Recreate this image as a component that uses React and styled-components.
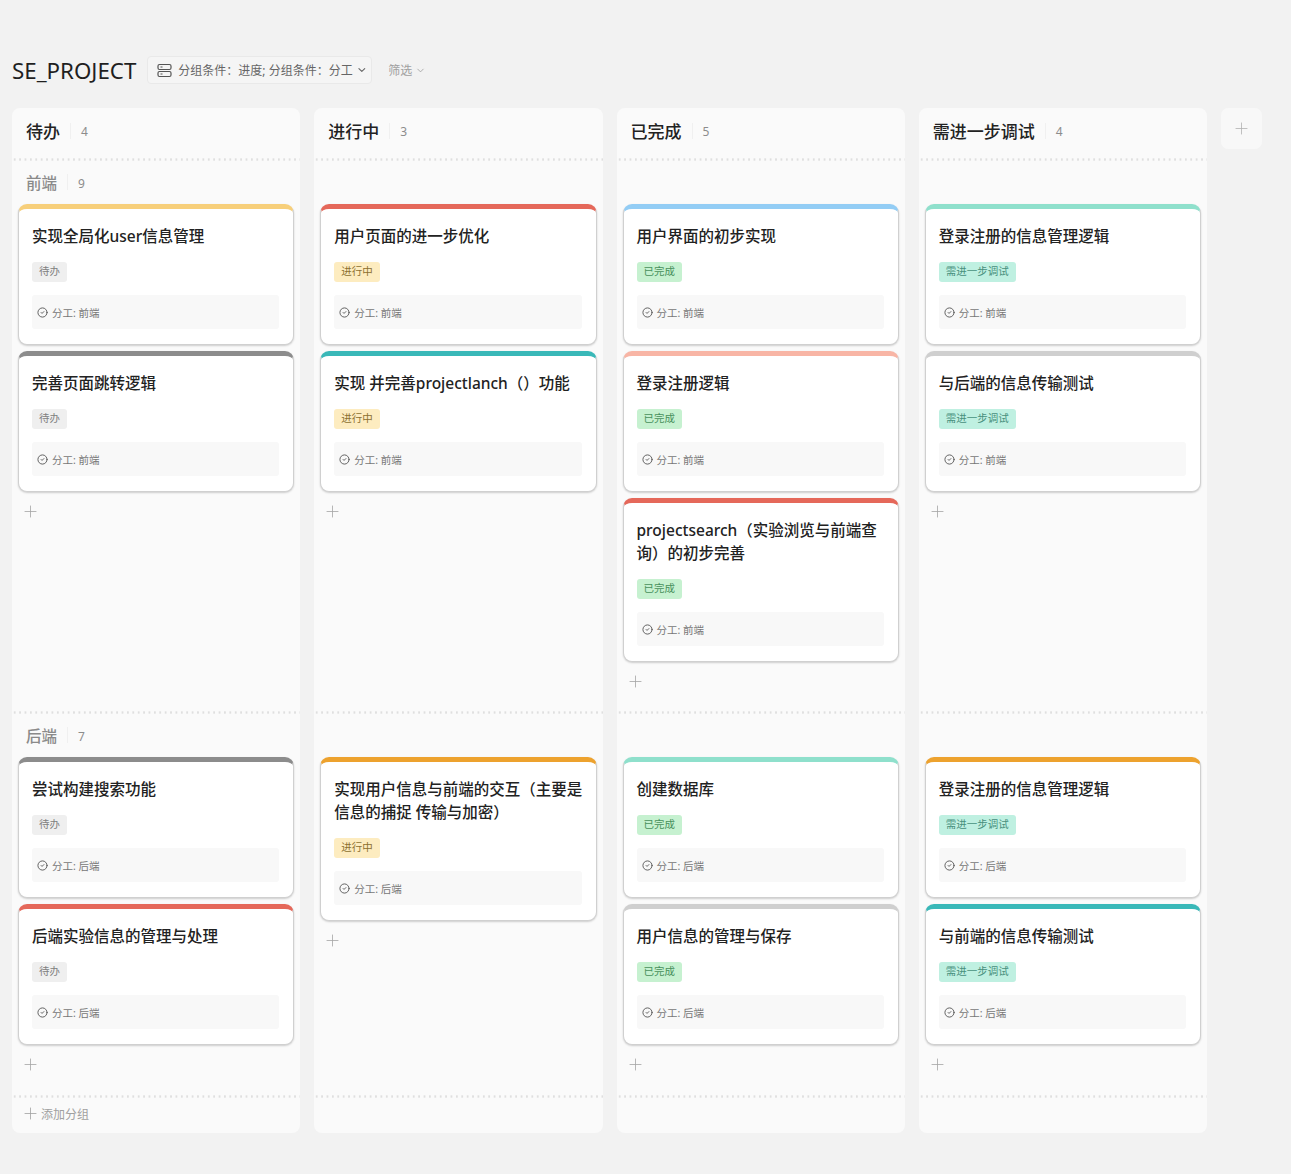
import styled, { createGlobalStyle } from 'styled-components'
import { CircleCheck, ChevronDown, Plus } from 'lucide-react'

const GlobalStyle = createGlobalStyle`
  html, body {
    margin: 0;
    padding: 0;
    background: #f2f2f2;
  }
  body {
    font-family: "Noto Sans", "Noto Sans CJK SC", sans-serif;
    -webkit-font-smoothing: antialiased;
  }
`

const dottedLine = `
  background-image: radial-gradient(circle, #dfdfdf 1px, transparent 1.3px);
  background-size: 5.4px 3px;
  background-repeat: repeat-x;
  background-position: 0 0;
  padding-top: 2px;
`

const Page = styled.div`
  width: 1291px;
  height: 1174px;
  overflow: hidden;
  padding: 56px 0 0 12px;
  box-sizing: border-box;
`

const Toolbar = styled.div`
  display: flex;
  align-items: center;
  height: 28px;
  margin-bottom: 24px;
`

const ProjectName = styled.h1`
  margin: 0 11px 0 0;
  font-size: 22.3px;
  font-weight: 400;
  line-height: 28px;
  padding-top: 2px;
  color: #1f1f1f;
`

const GroupPill = styled.div`
  display: flex;
  align-items: center;
  gap: 3px;
  height: 28px;
  box-sizing: border-box;
  width: 225px;
  padding: 0 4px 0 9px;
  border: 1px solid #e9e9e9;
  border-radius: 4px;
  background: #f5f5f5;
  font-size: 12px;
  color: #666;
  white-space: nowrap;
`

const GroupIconSvg = styled.svg`
  flex: none;
  margin-right: 3px;
`

const FilterButton = styled.div`
  display: flex;
  align-items: center;
  gap: 3px;
  margin-left: 16px;
  font-size: 12px;
  color: #a0a0a0;
`

const Board = styled.div`
  display: flex;
  align-items: flex-start;
  gap: 14px;
`

const Column = styled.section`
  flex: none;
  width: 288.25px;
  height: 1025px;
  display: flex;
  flex-direction: column;
  border-radius: 8px;
  background: #fafafa;
`

const ColumnHeader = styled.header`
  display: flex;
  align-items: center;
  height: 50px;
  padding: 0 14px 5px;
  box-sizing: border-box;
  flex: none;
`

const ColumnTitle = styled.span`
  font-size: 17px;
  font-weight: 500;
  color: #222;
`

const Divider = styled.i`
  width: 1px;
  height: 16px;
  background: #f0f0f0;
  margin: 0 10px;
`

const Count = styled.span`
  font-size: 12px;
  color: #8c8c8c;
  padding-top: 2px;
`

const Group = styled.div`
  ${dottedLine}
  flex: none;
  height: ${(p) => p.$height}px;
  box-sizing: border-box;
  padding-left: 6px;
  padding-right: 6px;
`

const GroupHeading = styled.div`
  display: flex;
  align-items: center;
  height: ${(p) => p.$height}px;
  padding: 0 8px;
  box-sizing: border-box;
`

const GroupTitle = styled.span`
  font-size: 15.5px;
  font-weight: 500;
  color: #8a8a8a;
`

const CardList = styled.div`
  display: flex;
  flex-direction: column;
  gap: 6px;
`

const Card = styled.article`
  box-sizing: border-box;
  padding: 16px 14px 15px 13px;
  border: 1px solid #d0d0d0;
  border-top: 5px solid ${(p) => p.$accent};
  border-radius: 9px;
  background: #fff;
  box-shadow: 0 1px 2px rgba(0, 0, 0, 0.18);
`

const CardTitle = styled.div`
  margin-right: -2px;
  font-size: 15.5px;
  line-height: 23px;
  font-weight: 500;
  color: #222;
`

const TagRow = styled.div`
  height: 33px;
`

const Tag = styled.span`
  display: inline-block;
  height: 20px;
  margin-top: 14px;
  padding: 0 7px;
  border-radius: 3px;
  font-size: 10.5px;
  line-height: 19px;
  vertical-align: top;
  background: ${(p) => p.$bg};
  color: ${(p) => p.$fg};
`

const MetaRow = styled.div`
  display: flex;
  align-items: center;
  gap: 4px;
  height: 34px;
  margin-top: 14px;
  padding-left: 5px;
  border-radius: 3px;
  background: #f8f8f8;
  font-size: 10.5px;
  color: #777;

  svg {
    color: #555;
  }
`

const AddRow = styled.div`
  display: flex;
  align-items: center;
  height: 38px;
  padding-left: 3px;
  color: #a4a4a4;
`

const Footer = styled.div`
  ${dottedLine}
  flex: 1;
  display: flex;
  align-items: center;
  gap: 1px;
  padding-left: 9px;
  padding-bottom: 3px;
  font-size: 12px;
  color: #a0a0a0;
`

const AddColumn = styled.div`
  flex: none;
  width: 41px;
  height: 41px;
  display: flex;
  align-items: center;
  justify-content: center;
  border-radius: 7px;
  background: #f8f8f8;
  color: #b0b0b0;
`

const TAGS = {
  todo: { label: '待办', bg: '#efefef', fg: '#808080' },
  doing: { label: '进行中', bg: '#fdecc0', fg: '#8c7030' },
  done: { label: '已完成', bg: '#c6f1d0', fg: '#48905c' },
  debug: { label: '需进一步调试', bg: '#bff0e1', fg: '#488f7d' },
}

const COLUMNS = [
  {
    title: '待办',
    count: 4,
    tag: 'todo',
    front: [
      ['实现全局化user信息管理', '#f7cf7a'],
      ['完善页面跳转逻辑', '#8c8c8c'],
    ],
    back: [
      ['尝试构建搜索功能', '#8c8c8c'],
      ['后端实验信息的管理与处理', '#e5685a'],
    ],
  },
  {
    title: '进行中',
    count: 3,
    tag: 'doing',
    front: [
      ['用户页面的进一步优化', '#e5685a'],
      ['实现 并完善projectlanch（）功能', '#39b8b8'],
    ],
    back: [['实现用户信息与前端的交互（主要是信息的捕捉 传输与加密）', '#eda22e']],
  },
  {
    title: '已完成',
    count: 5,
    tag: 'done',
    front: [
      ['用户界面的初步实现', '#93cdf5'],
      ['登录注册逻辑', '#f8b5a5'],
      ['projectsearch（实验浏览与前端查询）的初步完善', '#e5685a'],
    ],
    back: [
      ['创建数据库', '#8fe0cc'],
      ['用户信息的管理与保存', '#cfcfcf'],
    ],
  },
  {
    title: '需进一步调试',
    count: 4,
    tag: 'debug',
    front: [
      ['登录注册的信息管理逻辑', '#8fe0cc'],
      ['与后端的信息传输测试', '#cfcfcf'],
    ],
    back: [
      ['登录注册的信息管理逻辑', '#eda22e'],
      ['与前端的信息传输测试', '#39b8b8'],
    ],
  },
]

const GroupIcon = () => (
  <GroupIconSvg width="15" height="15" viewBox="0 0 15 15" fill="none" stroke="#555" strokeWidth="1.2">
    <rect x="1" y="1.5" width="13" height="5" rx="1.5" />
    <rect x="1" y="8.5" width="13" height="5" rx="1.5" />
    <path d="M3.5 4h2M3.5 11h2" />
  </GroupIconSvg>
)

const TaskCard = ({ title, accent, tag, team }) => {
  const t = TAGS[tag]
  return (
    <Card $accent={accent}>
      <CardTitle>{title}</CardTitle>
      <TagRow>
        <Tag $bg={t.bg} $fg={t.fg}>{t.label}</Tag>
      </TagRow>
      <MetaRow>
        <CircleCheck size={11} strokeWidth={2} />
        分工: {team}
      </MetaRow>
    </Card>
  )
}

const TaskGroup = ({ height, headHeight, heading, count, cards, tag, team }) => (
  <Group $height={height}>
    <GroupHeading $height={headHeight}>
      {heading && (
        <>
          <GroupTitle>{heading}</GroupTitle>
          <Divider />
          <Count>{count}</Count>
        </>
      )}
    </GroupHeading>
    <CardList>
      {cards.map(([title, accent], i) => (
        <TaskCard key={i} title={title} accent={accent} tag={tag} team={team} />
      ))}
    </CardList>
    <AddRow>
      <Plus size={19} strokeWidth={1} />
    </AddRow>
  </Group>
)

const App = () => (
  <Page>
    <GlobalStyle />
    <Toolbar>
      <ProjectName>SE_PROJECT</ProjectName>
      <GroupPill>
        <GroupIcon />
        分组条件：进度; 分组条件：分工
        <ChevronDown size={12} strokeWidth={2.2} />
      </GroupPill>
      <FilterButton>
        筛选
        <ChevronDown size={11} strokeWidth={1.8} />
      </FilterButton>
    </Toolbar>
    <Board>
      {COLUMNS.map((col, i) => (
        <Column key={col.title}>
          <ColumnHeader>
            <ColumnTitle>{col.title}</ColumnTitle>
            <Divider />
            <Count>{col.count}</Count>
          </ColumnHeader>
          <TaskGroup
            height={553}
            headHeight={44}
            heading={i === 0 ? '前端' : null}
            count={9}
            cards={col.front}
            tag={col.tag}
            team="前端"
          />
          <TaskGroup
            height={384}
            headHeight={44}
            heading={i === 0 ? '后端' : null}
            count={7}
            cards={col.back}
            tag={col.tag}
            team="后端"
          />
          <Footer>
            {i === 0 && (
              <>
                <Plus size={19} strokeWidth={1} />
                添加分组
              </>
            )}
          </Footer>
        </Column>
      ))}
      <AddColumn>
        <Plus size={19} strokeWidth={1} />
      </AddColumn>
    </Board>
  </Page>
)

export default App
